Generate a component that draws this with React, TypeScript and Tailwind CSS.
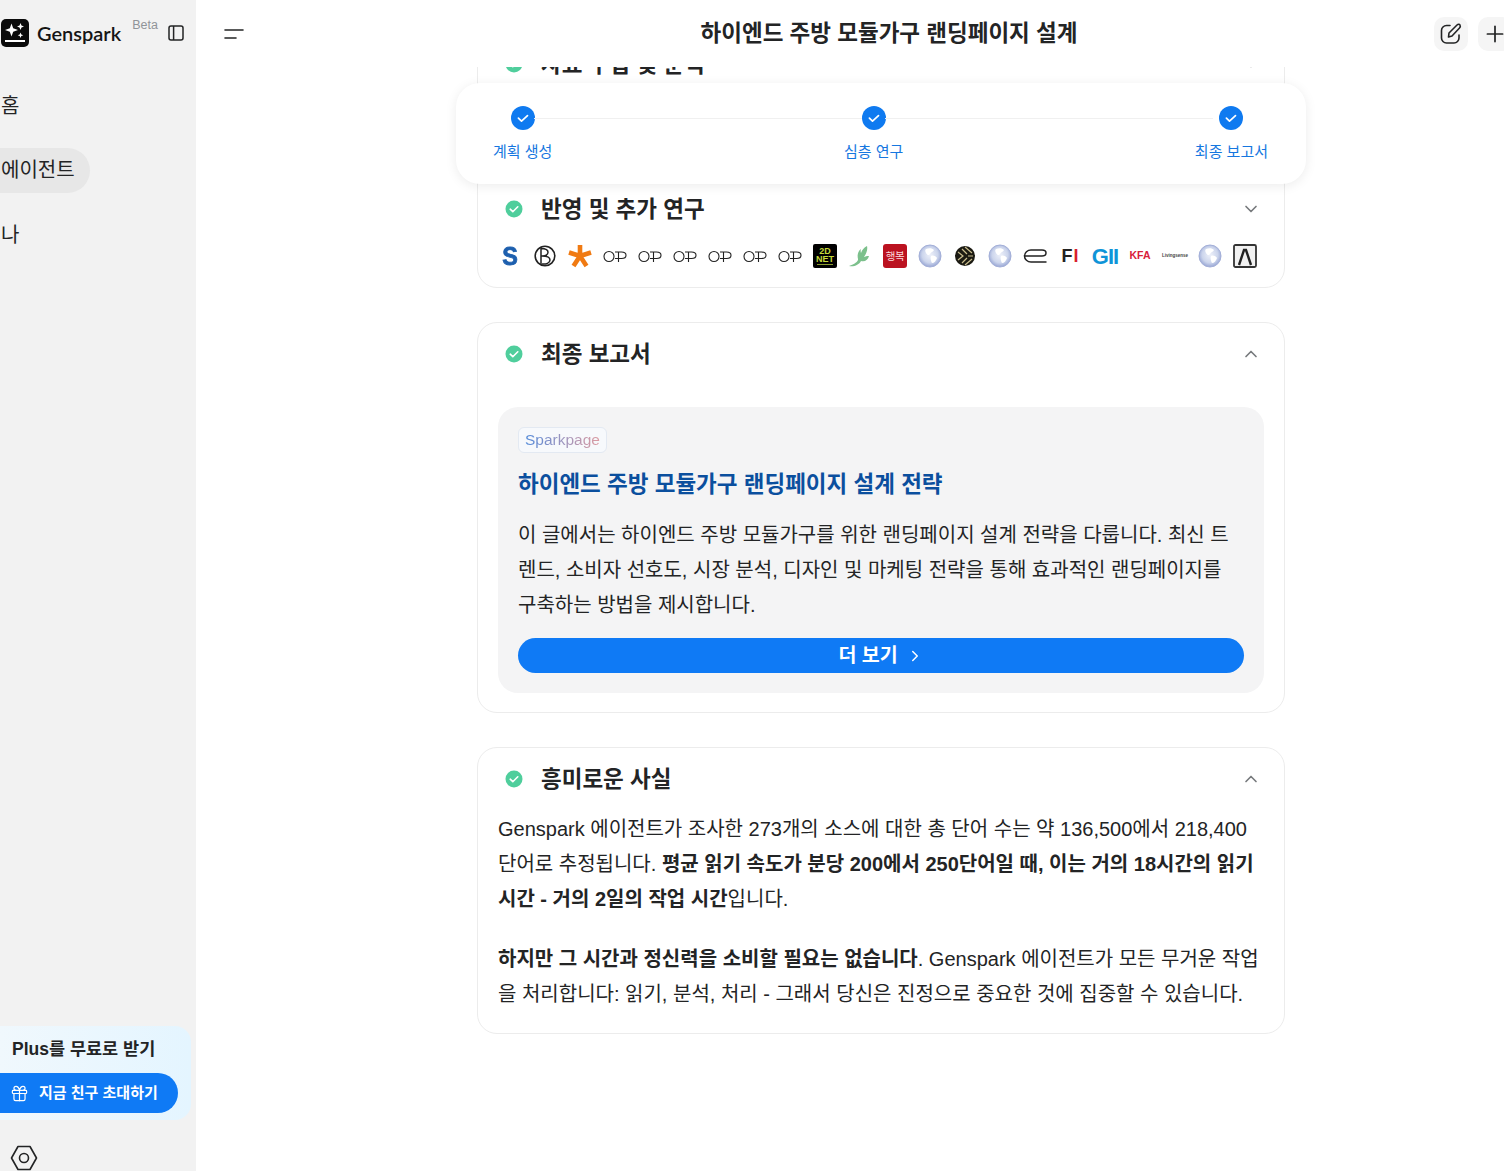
import { ChevronDown, ChevronUp, ChevronRight, Gift, Plus } from "lucide-react";

const font = "font-['Liberation_Sans','Noto_Sans_CJK_KR',sans-serif]";

function GreenCheck() {
  return (
    <svg width="18" height="18" viewBox="0 0 18 18" className="shrink-0">
      <circle cx="9" cy="9" r="8.5" fill="#4fce9c" />
      <path d="M5.2 9.2l2.6 2.5 5-4.9" fill="none" stroke="#fff" strokeWidth="1.6" strokeLinecap="round" strokeLinejoin="round" />
    </svg>
  );
}

function BlueCheck() {
  return (
    <svg width="24" height="24" viewBox="0 0 24 24" className="shrink-0">
      <circle cx="12" cy="12" r="12" fill="#0f7af0" />
      <path d="M7.4 12.2l3.1 3 6-5.6" fill="none" stroke="#fff" strokeWidth="1.7" strokeLinecap="round" strokeLinejoin="round" />
    </svg>
  );
}

function Globe() {
  return (
    <svg width="24" height="24" viewBox="0 0 24 24">
      <defs>
        <radialGradient id="gl" cx="50%" cy="45%" r="55%">
          <stop offset="0%" stopColor="#eef1fa" />
          <stop offset="65%" stopColor="#ccd5ec" />
          <stop offset="100%" stopColor="#98a6d4" />
        </radialGradient>
      </defs>
      <circle cx="12" cy="12" r="11" fill="url(#gl)" stroke="#a3afd8" strokeWidth="1" />
      <path d="M8 5c3-1 6-1 8 1-1 2-3 2-4 4s-3 1-4-1-1-3 0-4zM13 12c2-1 5 0 6 2-1 3-3 5-5 5-1-2-2-5-1-7z" fill="#fff" />
    </svg>
  );
}

function OP() {
  return (
    <svg width="24" height="24" viewBox="0 0 24 24">
      <ellipse cx="6" cy="12.500" rx="5" ry="5" fill="none" stroke="#222" strokeWidth="1.1" />
      <path d="M12 8h6.500c2.600 0 4.500 1.400 4.500 3.200S21.100 14.500 18.500 14.500H12M15.500 8v10" fill="none" stroke="#222" strokeWidth="1.1" />
    </svg>
  );
}

function Logos() {
  const box = "w-6 h-6 shrink-0 flex items-center justify-center";
  return (
    <div className={`flex items-center gap-[11px] h-6 ${font}`}>
      <div className={`${box} text-[26px] font-bold text-[#1d5fae] scale-x-90 [-webkit-text-stroke:0.8px_#1d5fae]`}>S</div>
      <div className={box}>
        <svg width="24" height="24" viewBox="0 0 24 24">
          <circle cx="12" cy="12" r="9.800" fill="none" stroke="#222" strokeWidth="1.6" />
          <path d="M8 3v18M8 12h6M8 4.500c4 0 7 1.500 7 3.800S12 12 9 12M9 12c3.500 0 8 1 8 4s-4 4.500-8 4" fill="none" stroke="#222" strokeWidth="1.5" />
        </svg>
      </div>
      <div className={box}>
        <svg width="24" height="24" viewBox="0 0 24 24">
          <path d="M12 1v11M12 12L1 8.500M12 12l11-3.500M12 12L5.500 22M12 12l6.500 10" fill="none" stroke="#f07a12" strokeWidth="4.600" />
        </svg>
      </div>
      <div className={box}><OP /></div>
      <div className={box}><OP /></div>
      <div className={box}><OP /></div>
      <div className={box}><OP /></div>
      <div className={box}><OP /></div>
      <div className={box}><OP /></div>
      <div className={`${box} bg-black rounded-[2px] flex-col text-[9px] leading-[8px] font-bold text-[#c5d83a] pb-px`}>
        <span>2D</span>
        <span>NET</span>
        <span className="w-4 h-px bg-[#8a9a30] mt-px" />
      </div>
      <div className={box}>
        <svg width="24" height="24" viewBox="0 0 24 24">
          <path d="M1 22c5 1 10-1 12-5 4 1 7-1 8-5-2 0-4 .500-5 1 2-3 4-7 3-11-3 1.500-5 4-6 7-.500-1-.500-3 0-4-3 2-4 6-3 10 .500 2-3 5-9 7z" fill="#7cc08c" />
        </svg>
      </div>
      <div className={`${box} bg-[#bb1220] rounded-[3px] text-[#fbdcdc] text-[10.500px] leading-[9px] tracking-[-0.5px] whitespace-nowrap`}>행복</div>
      <div className={box}><Globe /></div>
      <div className={box}>
        <svg width="24" height="24" viewBox="0 0 24 24">
          <circle cx="12" cy="12" r="10" fill="#1b1a12" />
          <path d="M5 8l5 4-5 4M9 5l5 5M9 19l5-5M12 3l7 6M12 21l7-6M15 12h5" fill="none" stroke="#c9bd8e" strokeWidth="1.200" />
        </svg>
      </div>
      <div className={box}><Globe /></div>
      <div className={box}>
        <svg width="24" height="24" viewBox="0 0 24 24">
          <path d="M23.500 18H8c-3.500 0-6.500-2.500-6.500-6S4.500 6 8 6h11c2.500 0 4 1.300 4 3s-1.500 3-4 3H2" fill="none" stroke="#222" strokeWidth="1.500" />
        </svg>
      </div>
      <div className={`${box} text-[18px] font-bold text-[#222] gap-px`}>
        <span>F</span>
        <span className="text-[#d8202f]">I</span>
      </div>
      <div className={`${box} text-[22px] font-bold text-[#0f94d8] tracking-[-1px] whitespace-nowrap`}>GII</div>
      <div className={`${box} text-[10.500px] font-bold text-[#d9203a] whitespace-nowrap`}>KFA</div>
      <div className={`${box} text-[4.500px] font-bold text-[#444] whitespace-nowrap`}>Livingsense</div>
      <div className={box}><Globe /></div>
      <div className={box}>
        <svg width="24" height="24" viewBox="0 0 24 24">
          <rect x="1" y="1" width="22" height="22" rx="1.500" fill="#f1f1f1" stroke="#333" strokeWidth="1.800" />
          <path d="M6 21L11 6h2l5 15" fill="none" stroke="#222" strokeWidth="2.400" />
        </svg>
      </div>
    </div>
  );
}

function SectionHeader({ title, open }: { title: string; open: boolean }) {
  return (
    <div className="flex items-center h-8 pl-[27px] pr-[23px]">
      <GreenCheck />
      <span className="ml-[18px] pt-px text-[22.500px] font-semibold text-[#232425] leading-8">{title}</span>
      <div className="flex-1" />
      {open ? (
        <ChevronUp size={20} className="text-[#76797c]" />
      ) : (
        <ChevronDown size={20} className="text-[#76797c]" />
      )}
    </div>
  );
}

function Sidebar() {
  return (
    <aside className="w-[196px] shrink-0 h-full bg-[#f2f2f2] flex flex-col overflow-hidden">
      <div className="flex items-center h-[66px] pl-px">
        <svg width="28" height="28" viewBox="0 0 28 28" className="shrink-0">
          <rect width="28" height="28" rx="5" fill="#0b0b0b" />
          <path d="M10.500 4.500l1.700 4.800 4.800 1.700-4.800 1.700-1.700 4.800-1.700-4.800L4 11l4.800-1.700zM19.500 4l1 2.500 2.500 1-2.500 1-1 2.500-1-2.500-2.500-1 2.500-1zM19.500 13.500l.8 2 2 .8-2 .8-.8 2-.8-2-2-.8 2-.8z" fill="#fff" />
          <rect x="4" y="21" width="20" height="2" fill="#fff" />
        </svg>
        <span className="ml-2 text-[20px] font-semibold font-['Lato',sans-serif] text-[#151515]">Genspark</span>
        <span className={`ml-[11px] mb-[16px] text-[12.500px] text-[#909499] ${font}`}>Beta</span>
        <svg width="16" height="16" viewBox="0 0 16 16" className="ml-[10px] shrink-0">
          <rect x="1" y="1" width="14" height="14" rx="2" fill="none" stroke="#232425" strokeWidth="1.500" />
          <path d="M5.600 1v14" stroke="#232425" strokeWidth="1.500" />
        </svg>
      </div>
      <nav className={`flex flex-col mt-[17px] text-[20px] text-[#232425] ${font}`}>
        <div className="h-[45px] flex items-center pl-px">홈</div>
        <div className="mt-5 h-[45px] w-[90px] flex items-center pl-px pb-[2px] bg-[#e7e7e7] rounded-r-full">에이전트</div>
        <div className="mt-5 h-[45px] flex items-center pl-px pb-[2px]">나</div>
      </nav>
      <div className="flex-1" />
      <div className={`w-[191px] h-[94px] rounded-r-[16px] bg-gradient-to-r from-[#f0f8fd] to-[#e4f5ff] pt-[11px] ${font}`}>
        <div className="pl-3 text-[17.500px] font-bold text-[#232425] leading-6">Plus를 무료로 받기</div>
        <div className="mt-3 w-[178px] h-10 bg-[#0f7af5] rounded-r-full flex items-center pl-[10px] text-white">
          <Gift size={19} strokeWidth={1.5} />
          <span className="ml-[10px] text-[15px] font-bold">지금 친구 초대하기</span>
        </div>
      </div>
      <div className="h-[51px] flex items-center pl-[10px] pt-[25px]">
        <svg width="28" height="26" viewBox="0 0 28 26">
          <path d="M8 1.500h12L26.500 13 20 24.500H8L1.500 13z" fill="none" stroke="#232425" strokeWidth="1.600" strokeLinejoin="round" />
          <circle cx="14" cy="13" r="4.500" fill="none" stroke="#232425" strokeWidth="1.600" />
        </svg>
      </div>
    </aside>
  );
}

function Stepper() {
  return (
    <div className={`absolute top-[83px] left-[260px] w-[850px] h-[101px] bg-white rounded-[24px] shadow-[0_2px_12px_rgba(0,0,0,0.08)] pl-[37px] pr-[38px] pt-[23px] flex items-start text-[15px] text-[#1677e0] ${font}`}>
      <div className="flex flex-col items-center gap-3">
        <BlueCheck />
        <span className="leading-[20px]">계획 생성</span>
      </div>
      <div className="flex-1 h-px bg-[#f0f0f0] mt-3 -mx-[18px]" />
      <div className="flex flex-col items-center gap-3">
        <BlueCheck />
        <span className="leading-[20px]">심층 연구</span>
      </div>
      <div className="flex-1 h-px bg-[#f0f0f0] mt-3 -mx-[18px]" />
      <div className="flex flex-col items-center gap-3">
        <BlueCheck />
        <span className="leading-[20px]">최종 보고서</span>
      </div>
    </div>
  );
}

export default function App() {
  return (
    <div className={`h-[1171px] w-[1504px] flex overflow-hidden bg-white ${font}`}>
      <Sidebar />
      <main className="relative flex-1 min-w-0 h-full overflow-hidden flex flex-col">
        <header className="h-[67px] w-[1386px] shrink-0 flex items-center">
          <div className="w-[148px] shrink-0 pl-[28px]">
            <svg width="20" height="12" viewBox="0 0 20 12">
              <path d="M1 2h18M1 10h11" stroke="#232425" strokeWidth="1.600" strokeLinecap="round" />
            </svg>
          </div>
          <h1 className="flex-1 text-center text-[22.500px] pt-px font-semibold text-[#232425]">하이엔드 주방 모듈가구 랜딩페이지 설계</h1>
          <div className="w-[148px] shrink-0 flex gap-[10px]">
            <div className="w-[34px] h-[34px] shrink-0 rounded-[10px] bg-[#f5f5f5] flex items-center justify-center">
              <svg width="24" height="24" viewBox="0 0 24 24" fill="none" stroke="#232425" strokeWidth="1.600" strokeLinecap="round" strokeLinejoin="round">
                <path d="M11 3.500H7.500a5 5 0 0 0-5 5V16a5 5 0 0 0 5 5H15a5 5 0 0 0 5-5v-3" />
                <path d="M9.500 15l.5-4 8-8c1-1 2.500-1 3 0s.5 2-.5 3l-7.500 8z" />
              </svg>
            </div>
            <div className="w-[34px] h-[34px] shrink-0 rounded-[10px] bg-[#f5f5f5] flex items-center justify-center">
              <Plus size={26} strokeWidth={1.6} className="text-[#232425]" />
            </div>
          </div>
        </header>
        <div className="flex-1 min-h-0 overflow-hidden">
          <div className="ml-[281px] w-[808px] -mt-[100px] flex flex-col gap-[34px]">
            <section className="border border-[#ececec] rounded-[20px] pt-[80px] pb-[19px]">
              <SectionHeader title="자료 수집 및 분석" open={false} />
              <div className="h-[113px]" />
              <SectionHeader title="반영 및 추가 연구" open={false} />
              <div className="mt-[19px] pl-5">
                <Logos />
              </div>
            </section>
            <section className="border border-[#ececec] rounded-[20px] pt-[15px] px-5 pb-[19px]">
              <div className="-mx-5">
                <SectionHeader title="최종 보고서" open={true} />
              </div>
              <div className="mt-[37px] bg-[#f4f4f5] rounded-[20px] p-5">
                <div className="inline-flex items-center h-[26px] px-[6px] rounded-[6px] border border-[#e3e9f2] bg-[#f7f9fc] text-[15.500px]">
                  <span className="bg-gradient-to-r from-[#4f88d8] to-[#dc9aa0] bg-clip-text text-transparent">Sparkpage</span>
                </div>
                <h2 className="mt-4 text-[22.500px] leading-[32px] font-semibold text-[#0b4f9e]">하이엔드 주방 모듈가구 랜딩페이지 설계 전략</h2>
                <p className="mt-[17px] text-[20px] leading-[35px] text-[#232425]">
                  이 글에서는 하이엔드 주방 모듈가구를 위한 랜딩페이지 설계 전략을 다룹니다. 최신 트렌드, 소비자 선호도, 시장 분석, 디자인 및 마케팅 전략을 통해 효과적인 랜딩페이지를 구축하는 방법을 제시합니다.
                </p>
                <div className="mt-[15px] h-[35px] rounded-full bg-[#0f7af5] text-white flex items-center justify-center text-[19.500px] font-semibold">
                  <span>더 보기</span>
                  <ChevronRight size={18} className="ml-2" />
                </div>
              </div>
            </section>
            <section className="border border-[#ececec] rounded-[20px] pt-[15px] px-5 pb-[21px]">
              <div className="-mx-5">
                <SectionHeader title="흥미로운 사실" open={true} />
              </div>
              <p className="mt-[17px] text-[20px] leading-[35px] text-[#232425]">
                Genspark 에이전트가 조사한 273개의 소스에 대한 총 단어 수는 약 136,500에서 218,400 단어로 추정됩니다. <strong>평균 읽기 속도가 분당 200에서 250단어일 때, 이는 거의 18시간의 읽기 시간 - 거의 2일의 작업 시간</strong>입니다.
              </p>
              <p className="mt-[25px] text-[20px] leading-[35px] text-[#232425]">
                <strong>하지만 그 시간과 정신력을 소비할 필요는 없습니다</strong>. Genspark 에이전트가 모든 무거운 작업을 처리합니다: 읽기, 분석, 처리 - 그래서 당신은 진정으로 중요한 것에 집중할 수 있습니다.
              </p>
            </section>
          </div>
        </div>
        <Stepper />
      </main>
    </div>
  );
}
